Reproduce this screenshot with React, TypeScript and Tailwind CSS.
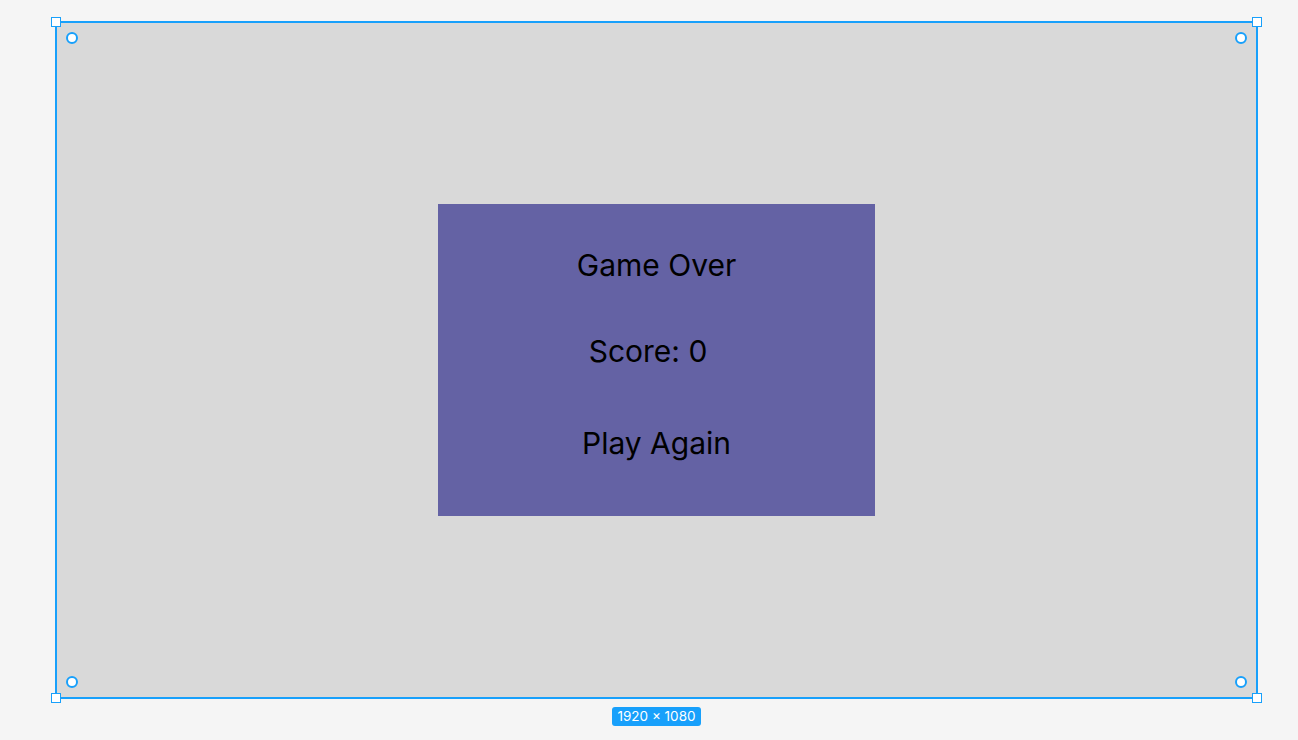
import React from "react";

const Handle = ({ cls }: { cls: string }) => (
  <div className={`absolute w-[10px] h-[10px] bg-white border-[1.5px] border-[#18a0fb] ${cls}`} />
);
const Dot = ({ cls }: { cls: string }) => (
  <div className={`absolute w-[12px] h-[12px] rounded-full bg-white border-2 border-[#18a0fb] ${cls}`} />
);

export default function App() {
  return (
    <div
      className="w-full h-[740px] bg-[#f5f5f5] flex flex-col items-start pl-[55px] pt-[21px]"
      style={{ fontFamily: "Inter, 'Noto Sans', sans-serif" }}
    >
      <div className="relative w-[1203px] h-[678px] border-2 border-[#18a0fb] bg-[#d9d9d9] pl-[381px] pt-[181px]">
        <div className="w-[437px] h-[312px] bg-[#6462a4] flex flex-col items-center text-black text-[30px] leading-[30px] pt-[46px]">
          <div>Game Over</div>
          <div className="mt-[56px] mr-[17px]">Score: 0</div>
          <div className="mt-[62px]">Play Again</div>
        </div>
        <Handle cls="-left-[6px] -top-[6px]" />
        <Handle cls="-right-[6px] -top-[6px]" />
        <Handle cls="-left-[6px] -bottom-[6px]" />
        <Handle cls="-right-[6px] -bottom-[6px]" />
        <Dot cls="left-[9px] top-[9px]" />
        <Dot cls="right-[9px] top-[9px]" />
        <Dot cls="left-[9px] bottom-[9px]" />
        <Dot cls="right-[9px] bottom-[9px]" />
      </div>
      <div className="w-[1203px] flex justify-center mt-[8px]">
        <div className="h-[19px] px-[5px] rounded-[3px] bg-[#18a0fb] text-white text-[13.5px] leading-[19px]">
          1920 × 1080
        </div>
      </div>
    </div>
  );
}
